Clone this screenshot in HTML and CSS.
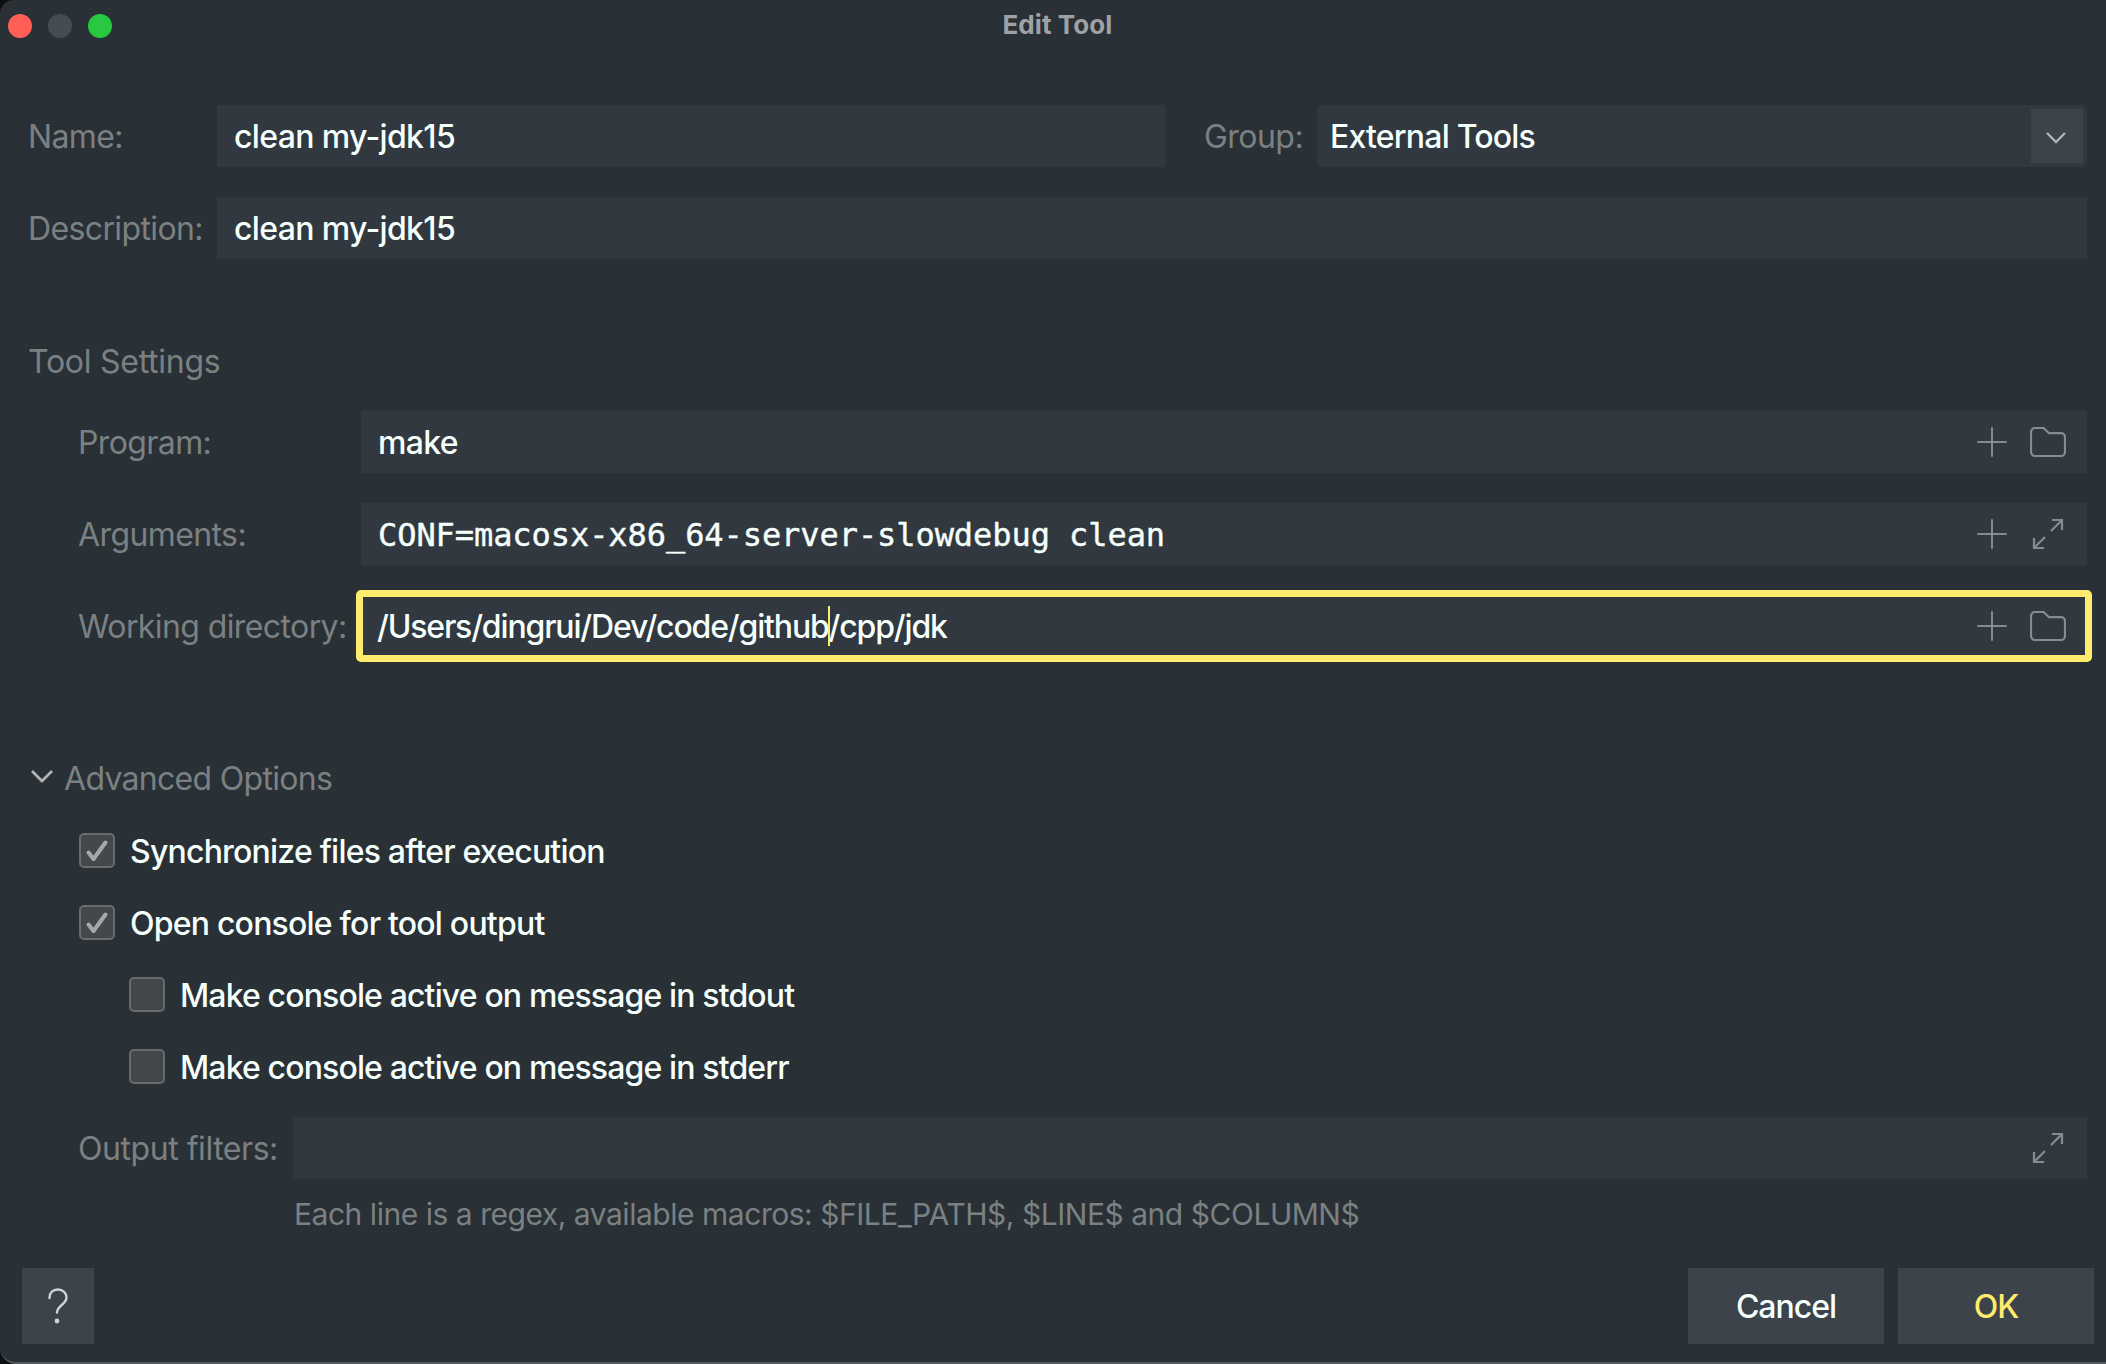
FILE: index.html
```html
<!DOCTYPE html>
<html lang="en">
<head>
<meta charset="utf-8">
<title>Edit Tool</title>
<link rel="stylesheet" href="styles.css">
</head>
<body>
<main class="dialog">
  <header class="titlebar">
    <div class="lights"><span class="light close"></span><span class="light minimize"></span><span class="light expand"></span></div>
    <h1 class="title">Edit Tool</h1>
  </header>

  <section class="identity">
    <div class="row">
      <label class="label label-main"><span class="t">Name:</span></label>
      <div class="field field-name"><span class="t">clean my-jdk15</span></div>
      <label class="label label-group"><span class="t">Group:</span></label>
      <div class="field combo"><span class="t">External Tools</span>
        <span class="combo-button"><svg width="22" height="14" viewBox="0 0 22 14"><path class="stroke-arrow" d="M2 2l9 9 9-9"/></svg></span>
      </div>
    </div>
    <div class="row">
      <label class="label label-main"><span class="t">Description:</span></label>
      <div class="field"><span class="t">clean my-jdk15</span></div>
    </div>
  </section>

  <section class="settings">
    <h2 class="heading heading-tool">Tool Settings</h2>
    <div class="row">
      <label class="label label-setting"><span class="t">Program:</span></label>
      <div class="field"><span class="t">make</span>
        <span class="actions">
          <svg width="30" height="30" viewBox="0 0 30 30"><path class="stroke-plus" d="M15 1v28M1 15h28"/></svg>
          <svg width="36" height="30" viewBox="0 0 36 30"><path class="stroke-icon" d="M5 1h8.500l5.500 5.200h12a4 4 0 0 1 4 4V25a4 4 0 0 1-4 4H5a4 4 0 0 1-4-4V5a4 4 0 0 1 4-4z"/></svg>
        </span>
      </div>
    </div>
    <div class="row">
      <label class="label label-setting"><span class="t">Arguments:</span></label>
      <div class="field"><span class="t mono">CONF=macosx-x86_64-server-slowdebug clean</span>
        <span class="actions">
          <svg width="30" height="30" viewBox="0 0 30 30"><path class="stroke-plus" d="M15 1v28M1 15h28"/></svg>
          <svg width="36" height="30" viewBox="0 0 36 30"><path class="stroke-icon" d="M22 1h10v10M32 1L21 12M4 19v10h10M4 29l11-11"/></svg>
        </span>
      </div>
    </div>
    <div class="row">
      <label class="label label-setting label-working"><span class="t">Working directory:</span></label>
      <div class="field focused"><span class="t path">/Users/dingrui/Dev/code/github<span class="caret"></span>/cpp/jdk</span>
        <span class="actions">
          <svg width="30" height="30" viewBox="0 0 30 30"><path class="stroke-plus" d="M15 1v28M1 15h28"/></svg>
          <svg width="36" height="30" viewBox="0 0 36 30"><path class="stroke-icon" d="M5 1h8.500l5.500 5.200h12a4 4 0 0 1 4 4V25a4 4 0 0 1-4 4H5a4 4 0 0 1-4-4V5a4 4 0 0 1 4-4z"/></svg>
        </span>
      </div>
    </div>
  </section>

  <section class="advanced">
    <h2 class="heading disclosure"><svg width="24" height="16" viewBox="0 0 24 16"><path class="stroke-disclosure" d="M2 2l10 10L22 2"/></svg><span class="t">Advanced Options</span></h2>
    <div class="check-row"><span class="box"><svg width="22" height="22" viewBox="0 0 22 22"><path class="stroke-check" d="M2.500 12.500l5 6.500L19.500 2.500"/></svg></span><span class="t">Synchronize files after execution</span></div>
    <div class="check-row"><span class="box"><svg width="22" height="22" viewBox="0 0 22 22"><path class="stroke-check" d="M2.500 12.500l5 6.500L19.500 2.500"/></svg></span><span class="t">Open console for tool output</span></div>
    <div class="check-row nested"><span class="box"></span><span class="t">Make console active on message in stdout</span></div>
    <div class="check-row nested"><span class="box"></span><span class="t">Make console active on message in stderr</span></div>
    <div class="row output-row">
      <label class="label label-output"><span class="t">Output filters:</span></label>
      <div class="field">
        <span class="actions">
          <svg width="36" height="30" viewBox="0 0 36 30"><path class="stroke-icon" d="M22 1h10v10M32 1L21 12M4 19v10h10M4 29l11-11"/></svg>
        </span>
      </div>
    </div>
    <p class="hint"><span class="t">Each line is a regex, available macros: $FILE_PATH$, $LINE$ and $COLUMN$</span></p>
  </section>

  <footer class="footer">
    <button class="button help" aria-label="Help"><svg width="20" height="36" viewBox="0 0 20 36"><path class="stroke-help" d="M1.500 10C1.500 4.500 5 1.500 10 1.500s8.500 3.500 8.500 8c0 7-9.500 8-9.500 15"/><circle class="help-dot" cx="9" cy="33" r="2.400"/></svg></button>
    <button class="button"><span class="t">Cancel</span></button>
    <button class="button primary"><span class="t">OK</span></button>
  </footer>
</main>
</body>
</html>
```
FILE: styles.css
```css
* {
  box-sizing: border-box;
}

body {
  margin: 0;
  background: #0d0f11;
  font-family: Inter, "Liberation Sans", sans-serif;
  font-size: 32px;
  line-height: 38px;
}

.dialog {
  display: flex;
  flex-direction: column;
  width: 2106px;
  height: 1364px;
  overflow: hidden;
  border-bottom: 2px solid #54595d;
  border-radius: 14px 0 0 16px;
  background: #293036;
  color: #f5fffc;
}

.titlebar {
  display: grid;
  grid-template-columns: 1fr auto 1fr;
  align-items: center;
  height: 52px;
  padding-left: 9px;
}

.lights {
  display: flex;
  gap: 16px;
  margin-left: -1px;
}

.light {
  width: 24px;
  height: 24px;
  border-radius: 50%;
}

.close { background: #ff5f57; }
.minimize { background: #464c53; }
.expand { background: #28c840; }

.title {
  margin: 0 0 2px;
  color: #9fa1a4;
  font-size: 26px;
  font-weight: 700;
  line-height: 32px;
  letter-spacing: 0.1px;
}

.t {
  display: block;
  padding-top: 2px;
}

.identity,
.settings {
  display: flex;
  flex-direction: column;
  gap: 30px;
  padding: 0 19px 0 28px;
}

.identity {
  padding-top: 53px;
}

.row {
  display: flex;
  align-items: center;
}

.label,
.heading,
.hint {
  color: #7b8182;
  letter-spacing: -0.54px;
  white-space: nowrap;
}

.label { flex: none; }
.label-main { width: 189px; letter-spacing: -0.62px; }
.label-group { width: 152px; padding-left: 39px; }
.label-setting { width: 333px; padding-left: 50px; letter-spacing: -0.6px; }
.label-output { width: 265px; padding-left: 50px; letter-spacing: -0.45px; }

.field {
  display: flex;
  flex: 1;
  align-items: center;
  height: 62px;
  padding: 0 21px 0 17px;
  background: #31383f;
  font-weight: 500;
  letter-spacing: -0.66px;
  white-space: nowrap;
}

.field-name {
  flex: none;
  width: 948px;
}

.combo {
  padding: 0 4px 0 13px;
  border-radius: 5px;
  letter-spacing: -0.8px;
}

.combo-button {
  display: grid;
  place-items: center;
  width: 52px;
  height: 54px;
  margin-left: auto;
  padding: 3px 2px 0 0;
  background: #3c434a;
}

.settings {
  padding-top: 83px;
}

.heading {
  margin: 0;
  font-size: 32px;
  font-weight: 400;
}

.heading-tool {
  height: 39px;
  padding-top: 1px;
  letter-spacing: -0.26px;
}

.mono {
  font-family: "DejaVu Sans Mono", "Liberation Mono", monospace;
  letter-spacing: -0.07px;
  -webkit-text-stroke: 0.4px currentColor;
}

.focused {
  height: 72px;
  margin: -5px;
  padding: 0 19px 0 14px;
  border: 7px solid #ffec6e;
  border-radius: 5px;
}

.path {
  letter-spacing: -1.16px;
}

.caret {
  position: relative;
}

.caret::after {
  content: "";
  position: absolute;
  top: -1px;
  left: -1px;
  width: 2px;
  height: 40px;
  background: #ffec6e;
}

.actions {
  display: flex;
  gap: 23px;
  margin-left: auto;
}

svg {
  display: block;
  fill: none;
}

.stroke-arrow { stroke: #afb4bc; stroke-width: 2.4; }
.stroke-disclosure { stroke: #b0b2b4; stroke-width: 2.8; }
.stroke-plus { stroke: #868c8e; stroke-width: 2; stroke-linecap: round; }
.stroke-icon { stroke: #858b93; stroke-width: 2.2; }
.stroke-check { stroke: #a7a7a7; stroke-width: 4; stroke-linecap: round; stroke-linejoin: round; }
.stroke-help { stroke: #d0d3d6; stroke-width: 2.4; stroke-linecap: round; }
.help-dot { fill: #d0d3d6; }

.advanced {
  padding: 90px 19px 0 28px;
}

.disclosure {
  display: flex;
  align-items: center;
  gap: 10px;
  height: 62px;
  margin-bottom: 5.5px;
  padding-left: 2px;
  letter-spacing: -0.7px;
}

.disclosure svg {
  margin-bottom: 3px;
}

.check-row {
  display: flex;
  align-items: center;
  gap: 15px;
  height: 72px;
  padding-left: 51px;
  font-weight: 500;
  letter-spacing: -0.79px;
}

.nested {
  padding-left: 101px;
  letter-spacing: -0.86px;
}

.box {
  display: grid;
  place-items: center;
  width: 36px;
  height: 35px;
  border: 2px solid #6a6b6c;
  border-radius: 5px;
  background: #43494b;
}

.output-row {
  margin-top: 14.5px;
}

.hint {
  margin: 14px 0 0 266px;
  font-size: 30px;
  letter-spacing: -0.47px;
}

.footer {
  display: flex;
  gap: 14px;
  margin-top: auto;
  padding: 0 12px 18px 22px;
}

.button {
  display: grid;
  place-items: center;
  width: 196px;
  height: 76px;
  padding: 0;
  border: 0;
  background: #3c434a;
  color: #f5fffc;
  font: inherit;
  font-weight: 500;
  letter-spacing: -1px;
}

.help {
  width: 72px;
  margin-right: auto;
}

.primary {
  color: #ffec6e;
}
```
